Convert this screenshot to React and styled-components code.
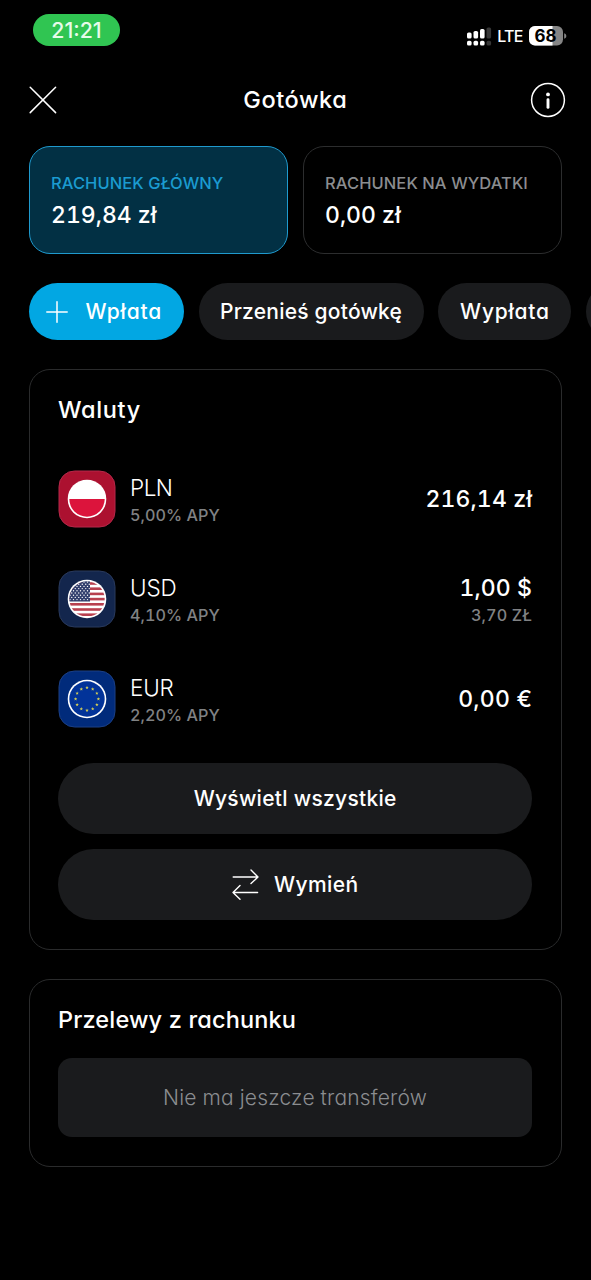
import React from "react";
import styled, { createGlobalStyle, css } from "styled-components";

const Global = createGlobalStyle`
  * { box-sizing: border-box; }
  html, body { margin: 0; background: #000; }
  body { font-family: Inter, "Noto Sans", sans-serif; font-feature-settings: "cv11", "tnum"; color: #fff; overflow-x: hidden; }
  svg { display: block; flex: none; }
`;

const Screen = styled.main`
  width: 591px;
  height: 1280px;
  overflow: hidden;
  background: #000;
`;

const text = css`
  font-size: ${(p) => p.$size}px;
  font-weight: ${(p) => p.$weight || 500};
  letter-spacing: ${(p) => p.$track || 0}px;
  margin: 0 ${(p) => -(p.$track || 0)}px 0 0;
  color: ${(p) => p.$color || "#fff"};
  white-space: nowrap;
`;
const Text = styled.span`
  ${text}
  line-height: ${(p) => p.$line || 28}px;
`;
const Heading = styled.h2`
  ${text}
  line-height: 28px;
`;

const StatusBar = styled.div`
  height: 70px;
  padding: 14px 24px 0 33px;
  display: flex;
  justify-content: space-between;
  align-items: flex-start;
`;
const TimePill = styled.div`
  width: 87px;
  height: 32px;
  border-radius: 16px;
  background: #30c552;
  font-feature-settings: normal;
  display: flex;
  align-items: center;
  justify-content: center;
`;
const Indicators = styled.div`
  display: flex;
  align-items: center;
  gap: 5.5px;
  height: 21px;
  margin-top: 11px;
`;

const Header = styled.header`
  height: 60px;
  padding: 0 26px 0 29px;
  display: grid;
  grid-template-columns: 30px 1fr 34px;
  align-items: center;
  justify-items: center;

  svg:first-child { justify-self: start; }
`;

const Accounts = styled.div`
  display: grid;
  grid-template-columns: 259px 259px;
  gap: 15px;
  padding: 16px 0 0 29px;
`;
const Account = styled.div`
  height: 108px;
  padding: 22px 0 0 21px;
  border: 1px solid ${(p) => (p.$active ? "#1f9ace" : "#2c2d2e")};
  border-radius: 21px;
  background: ${(p) => (p.$active ? "#023044" : "#000")};
  display: flex;
  flex-direction: column;
`;

const Chips = styled.div`
  display: flex;
  gap: 14.5px;
  padding: 29px 0 0 29px;
`;
const Chip = styled.button`
  flex: none;
  width: ${(p) => p.$w}px;
  height: 57px;
  border: 0;
  padding: 0 0 0 ${(p) => (p.$primary ? 17 : 0)}px;
  border-radius: 28.5px;
  background: ${(p) => (p.$primary ? "#02a7e3" : "#1a1b1d")};
  color: #fff;
  font-family: inherit;
  font-feature-settings: inherit;
  display: flex;
  align-items: center;
  justify-content: ${(p) => (p.$primary ? "flex-start" : "center")};
  gap: 17.5px;
`;

const Card = styled.section`
  width: 533px;
  height: ${(p) => p.$h}px;
  margin: 29px 0 0 29px;
  padding: 26px 29px 0 28px;
  border: 1px solid #2a2b2c;
  border-radius: 21px;
`;
const List = styled.div`
  padding-top: 46px;
  display: flex;
  flex-direction: column;
  gap: 43px;
`;
const Row = styled.div`
  height: 57px;
  display: flex;
  align-items: center;
`;
const Names = styled.div`
  margin-left: 14px;
  padding-top: 4px;
  display: flex;
  flex-direction: column;
`;
const Values = styled.div`
  margin-left: auto;
  padding-top: ${(p) => (p.$stacked ? 4 : 0)}px;
  display: flex;
  flex-direction: column;
  align-items: flex-end;
`;
const Actions = styled.div`
  display: flex;
  flex-direction: column;
  gap: 15px;
  padding-top: 36px;
`;
const WideButton = styled(Chip)`
  width: 100%;
  height: 71px;
  border-radius: 35.5px;
  gap: 15px;
`;
const Empty = styled.div`
  height: 79px;
  margin-top: 24px;
  border-radius: 14px;
  background: #1a1b1d;
  display: flex;
  align-items: center;
  justify-content: center;
`;

const Signal = () => (
  <svg width="25" height="20" viewBox="0 0 25 20" fill="#fff">
    <rect x="0" y="6.5" width="4.6" height="6" rx="1.6" />
    <rect x="6.5" y="5" width="4.6" height="7.5" rx="1.6" />
    <rect x="13" y="3" width="4.6" height="9.5" rx="1.6" />
    <rect x="19.5" y="1.5" width="4.6" height="11" rx="1.6" fill="#363636" />
    <rect x="0" y="14.8" width="4.6" height="4.8" rx="1.6" />
    <rect x="6.5" y="14.8" width="4.6" height="4.8" rx="1.6" />
    <rect x="13" y="14.8" width="4.6" height="4.8" rx="1.6" />
    <rect x="19.5" y="14.8" width="4.6" height="4.8" rx="1.6" fill="#363636" />
  </svg>
);

const Battery = () => (
  <svg width="38" height="20" viewBox="0 0 38 20">
    <defs>
      <clipPath id="cell"><rect width="34" height="19.6" rx="6" /></clipPath>
    </defs>
    <g clipPath="url(#cell)">
      <rect width="34" height="20" fill="#858585" />
      <rect width="23.5" height="20" fill="#fff" />
    </g>
    <path d="M35.2 7.2c1.4.5 2.1 1.5 2.1 2.8s-.7 2.3-2.1 2.8z" fill="#858585" />
    <text x="16.5" y="15.8" textAnchor="middle" fontFamily="Inter, sans-serif" fontWeight="700" fontSize="17">68</text>
  </svg>
);

const Close = () => (
  <svg width="28" height="28" viewBox="0 0 28 28" stroke="#fff" strokeWidth="1.5" strokeLinecap="round">
    <path d="M1.2 1.2 26.6 26.6M26.6 1.2 1.2 26.6" />
  </svg>
);
const Info = () => (
  <svg width="36" height="36" viewBox="0 0 36 36" fill="none">
    <circle cx="18" cy="18" r="16.4" stroke="#fff" strokeWidth="1.5" />
    <circle cx="18" cy="12.4" r="1.9" fill="#fff" />
    <path d="M18 17.8v7.6" stroke="#fff" strokeWidth="2.9" strokeLinecap="round" />
  </svg>
);
const Plus = () => (
  <svg width="22" height="22" viewBox="0 0 22 22" stroke="#fff" strokeWidth="1.5" strokeLinecap="round">
    <path d="M11 .8v20.4M.8 11h20.4" />
  </svg>
);
const Swap = () => (
  <svg width="27" height="31" viewBox="0 0 27 31" fill="none" stroke="#fff" strokeWidth="1.4" strokeLinecap="round" strokeLinejoin="round">
    <path d="M1.2 8H26M19 1l7 7-7 6.6M25.6 23.5H1M8 16.5l-7 7 7 6.7" />
  </svg>
);

const tiles = { PLN: "#ac1130", USD: "#13264d", EUR: "#012b7b" };
const rims = { PLN: "#b5294a", USD: "#2a3a5c", EUR: "#1c4085" };

const starPoints = (cx, cy, r) =>
  Array.from({ length: 10 }, (_, i) => {
    const a = (Math.PI * i) / 5 - Math.PI / 2;
    const q = i % 2 ? r * 0.45 : r;
    return `${cx + q * Math.cos(a)},${cy + q * Math.sin(a)}`;
  }).join(" ");

const Flag = ({ code }) => (
  <svg width="58" height="58" viewBox="0 0 58 58">
    <clipPath id={`c-${code}`}><circle cx="29" cy="29" r="17.7" /></clipPath>
    <rect x="1" y="1" width="56" height="56" rx="15.5" fill={tiles[code]} stroke={rims[code]} strokeWidth="1" />
    <circle cx="29" cy="29" r="19.3" fill="#fff" />
    <g clipPath={`url(#c-${code})`}>
      {code === "PLN" && <rect x="9" y="29" width="40" height="20" fill="#dc143c" />}
      {code === "USD" && (
        <>
          {[0, 1, 2, 3, 4, 5, 6].map((i) => (
            <rect key={i} x="9" y={12.2 + i * 5.2} width="40" height="2.6" fill="#b8404f" />
          ))}
          <rect x="9" y="9" width="23" height="22.5" fill="#33406e" />
          {Array.from({ length: 9 }, (_, r) =>
            Array.from({ length: 6 }, (_, c) => (
              <circle key={`${r}-${c}`} cx={12 + c * 3.5 + (r % 2) * 1.75} cy={12 + r * 2.2} r=".7" fill="#fff" />
            ))
          )}
        </>
      )}
      {code === "EUR" && (
        <>
          <rect x="9" y="9" width="40" height="40" fill="#023399" />
          {Array.from({ length: 12 }, (_, i) => {
            const a = (Math.PI * i) / 6;
            return <polygon key={i} points={starPoints(29 + 11.4 * Math.sin(a), 29 - 11.4 * Math.cos(a), 1.8)} fill="#d0cb58" />;
          })}
        </>
      )}
    </g>
  </svg>
);

const currencies = [
  { code: "PLN", track: -0.5, rate: "5,00% APY", value: "216,14 zł", valueTrack: 0.12 },
  { code: "USD", track: -0.1, rate: "4,10% APY", value: "1,00 $", valueTrack: 0.1, sub: "3,70 ZŁ" },
  { code: "EUR", track: -0.2, rate: "2,20% APY", value: "0,00 €", valueTrack: 0.25 },
];

export default function App() {
  return (
    <Screen>
      <Global />
      <StatusBar>
        <TimePill><Text $size={21.3} $color="#e6fbe9">21:21</Text></TimePill>
        <Indicators>
          <Signal />
          <Text $size={16} $track={-0.7}>LTE</Text>
          <Battery />
        </Indicators>
      </StatusBar>
      <Header>
        <Close />
        <Heading as="h1" $size={23.5} $track={0.6}>Gotówka</Heading>
        <Info />
      </Header>
      <Accounts>
        <Account $active>
          <Text $size={16.5} $track={0.07} $color="#1b9bd0">RACHUNEK GŁÓWNY</Text>
          <Text $size={23} $line={36}>219,84 zł</Text>
        </Account>
        <Account>
          <Text $size={16.5} $track={0.08} $color="#8b8d90">RACHUNEK NA WYDATKI</Text>
          <Text $size={23} $line={36}>0,00 zł</Text>
        </Account>
      </Accounts>
      <Chips>
        <Chip $primary $w={155}><Plus /><Text $size={21} $weight={550} $track={0.85}>Wpłata</Text></Chip>
        <Chip $w={225}><Text $size={21} $track={0.22}>Przenieś gotówkę</Text></Chip>
        <Chip $w={133}><Text $size={21} $track={0.75}>Wypłata</Text></Chip>
        <Chip $w={133} />
      </Chips>
      <Card $h={581}>
        <Heading $size={23.5} $track={0.65}>Waluty</Heading>
        <List>
          {currencies.map((c) => (
            <Row key={c.code}>
              <Flag code={c.code} />
              <Names>
                <Text $size={22.5} $weight={300} $track={c.track}>{c.code}</Text>
                <Text $size={16.2} $track={0.05} $color="#808284" $line={26}>{c.rate}</Text>
              </Names>
              <Values $stacked={Boolean(c.sub)}>
                <Text $size={23} $track={c.valueTrack}>{c.value}</Text>
                {c.sub && <Text $size={16.2} $track={0.15} $color="#808284" $line={26}>{c.sub}</Text>}
              </Values>
            </Row>
          ))}
        </List>
        <Actions>
          <WideButton><Text $size={21} $track={0.28} $line={29}>Wyświetl wszystkie</Text></WideButton>
          <WideButton><Swap /><Text $size={21} $track={0.4}>Wymień</Text></WideButton>
        </Actions>
      </Card>
      <Card $h={188}>
        <Heading $size={23.5} $track={0.15}>Przelewy z rachunku</Heading>
        <Empty><Text $size={21} $weight={300} $track={0.19} $color="#8b8d90">Nie ma jeszcze transferów</Text></Empty>
      </Card>
    </Screen>
  );
}
